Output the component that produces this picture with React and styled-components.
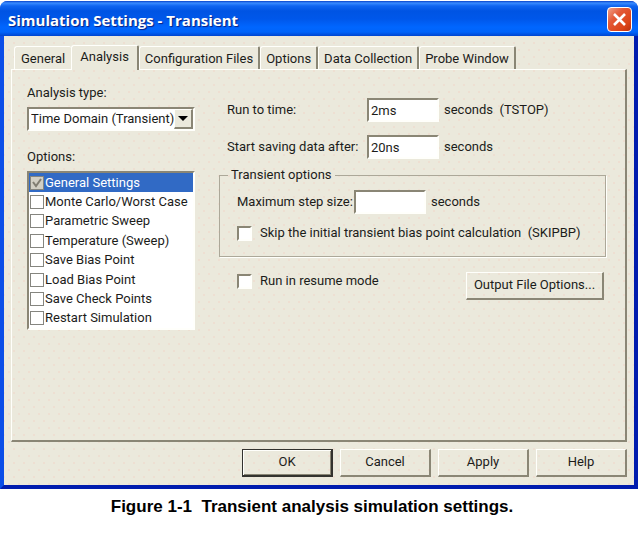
import React from "react";
import styled, { createGlobalStyle, css } from "styled-components";

const face = "#ebe9dc";
const shade = "#8a8675";
const midShade = "#aca899";
const light = "#fffffb";

const GlobalStyle = createGlobalStyle`
  *, *::before, *::after { box-sizing: border-box; }
  body {
    margin: 0;
    background: #fff;
    color: #1c1c1a;
    font: 13px/18px "Roboto", sans-serif;
  }
  button, input, select { font: inherit; color: inherit; margin: 0; }
`;

const Page = styled.main`
  padding-top: 1px;
`;

const Window = styled.section`
  border: solid #0535d8;
  border-width: 0 4px 4px;
  border-color: #0535d8 #001cae #001cae #0a4ee8;
  border-radius: 8px 8px 0 0;
  background-color: ${face};
  background-image: radial-gradient(circle, #eedfd2 0 1px, transparent 1px),
    radial-gradient(circle, #eedfd2 0 1px, transparent 1px);
  background-size: 10px 14px;
  background-position: 0 0, 5px 7px;
`;

const TitleBar = styled.header`
  display: flex;
  align-items: center;
  justify-content: space-between;
  height: 35px;
  margin: 0 -4px;
  padding: 2px 6px 0 8px;
  border-radius: 7px 7px 0 0;
  background: linear-gradient(
    #0842c8 0,
    #3a8cff 2px,
    #1065f0 5px,
    #0054e3 10px,
    #0057ea 18px,
    #0066ff 26px,
    #0064fa 31px,
    #0045cf 35px
  );
`;

const Title = styled.h1`
  margin: 0;
  color: #fff;
  font: bold 15px/22px "Open Sans", sans-serif;
  text-shadow: 1px 1px 1px #0a1f80;
  white-space: nowrap;
`;

const CloseButton = styled.button`
  display: grid;
  place-items: center;
  width: 25px;
  height: 25px;
  padding: 0;
  border: 1px solid #fff;
  border-radius: 4px;
  background: linear-gradient(135deg, #f0a088 0, #e35a38 35%, #dc4418 75%, #b83010 100%);
`;

const Client = styled.div`
  padding: 9px 7px 8px;
`;

const TabList = styled.div`
  display: flex;
  align-items: flex-end;
  padding-left: 3px;
`;

const Tab = styled.button`
  height: 23px;
  padding: 1px 5px 0;
  border: solid ${light};
  border-width: 1px 2px 0 1px;
  border-right-color: ${shade};
  border-radius: 3px 2px 0 0;
  background: ${face};
  white-space: nowrap;
  ${(p) =>
    p.$active &&
    css`
      height: 25px;
      margin-bottom: -1px;
      padding: 0 8px 2px;
      z-index: 1;
    `}
  ${(p) =>
    p.$beforeActive &&
    css`
      padding: 1px 6px 0;
      border-right-width: 0;
    `}
`;

const Panel = styled.div`
  display: grid;
  grid-template-columns: 168px 1fr;
  column-gap: 24px;
  padding: 14px 19px 110px 15px;
  border: solid ${shade};
  border-width: 1px 2px 2px 1px;
  border-top-color: ${light};
  border-left-color: ${light};
`;

const OptionsColumn = styled.div`
  display: flex;
  flex-direction: column;
`;

const SettingsColumn = styled.div`
  padding-top: 14px;
`;

const FieldLabel = styled.label`
  display: block;
  white-space: nowrap;
`;

const sunken = css`
  border: solid ${light};
  border-width: 2px;
  border-top-color: ${shade};
  border-left-color: ${shade};
  background: #fff;
`;

const SelectBox = styled.div`
  ${sunken}
  display: grid;
  grid-template-columns: 1fr 19px;
  height: 24px;
  margin: 5px 0 17px;
`;

const Select = styled.select`
  grid-area: 1 / 1 / 2 / 3;
  min-width: 0;
  padding: 0 0 0 2px;
  border: 0;
  background: transparent;
  appearance: none;
`;

const SelectArrow = styled.span`
  grid-area: 1 / 2;
  display: grid;
  place-items: center;
  border: solid ${shade};
  border-width: 1px 2px 2px 1px;
  border-top-color: ${light};
  border-left-color: ${light};
  background: ${face};
  pointer-events: none;
`;

const OptionList = styled.ul`
  ${sunken}
  display: grid;
  grid-auto-rows: 1fr;
  height: 159px;
  margin: 5px 0 0;
  padding: 0;
  list-style: none;
`;

const OptionRow = styled.li`
  display: flex;
  background: ${(p) => (p.$selected ? "#316ac5" : "transparent")};
  color: ${(p) => (p.$selected ? "#fff" : "inherit")};
`;

const OptionLabel = styled.label`
  display: flex;
  flex: 1;
  align-items: center;
  gap: 1px;
  padding-left: 1px;
  white-space: nowrap;
`;

const tick = `url("data:image/svg+xml,%3Csvg xmlns='http://www.w3.org/2000/svg' viewBox='0 0 12 12'%3E%3Cpath d='M2 5l3 4 5-7' fill='none' stroke='%23807d72' stroke-width='2'/%3E%3C/svg%3E")`;

const ListCheck = styled.input.attrs({ type: "checkbox" })`
  appearance: none;
  flex: none;
  width: 14px;
  height: 14px;
  border: 1px solid #85857f;
  background: #fff;
  &:checked {
    background: #d2cfc4 ${tick} center / 12px no-repeat;
  }
`;

const Row = styled.div`
  display: flex;
  align-items: center;
  height: 24px;
  padding-left: 8px;
  margin-bottom: ${(p) => p.$after}px;
`;

const RowLabel = styled(FieldLabel)`
  width: ${(p) => p.$width}px;
`;

const TextInput = styled.input.attrs({ type: "text" })`
  ${sunken}
  width: 72px;
  height: 24px;
  margin-right: 5px;
  padding: 0 2px;
`;

const Unit = styled.span`
  white-space: pre;
`;

const Group = styled.fieldset`
  min-width: 0;
  margin: 0;
  padding: 6px 0 11px 9px;
  border: 1px solid ${midShade};
  box-shadow: 1px 1px 0 ${light};
`;

const Legend = styled.legend`
  margin-left: -1px;
  padding: 0 3px;
`;

const CheckLabel = styled.label`
  display: flex;
  align-items: center;
  gap: 8px;
  white-space: pre;
`;

const CheckBox = styled.input.attrs({ type: "checkbox" })`
  ${sunken}
  appearance: none;
  flex: none;
  width: 15px;
  height: 15px;
  &:checked {
    background: #fff ${tick} center / 11px no-repeat;
  }
`;

const ResumeRow = styled.div`
  display: flex;
  align-items: flex-start;
  justify-content: space-between;
  padding: 15px 2px 0 18px;
`;

const Button = styled.button`
  width: ${(p) => (p.$wide ? 138 : 91)}px;
  height: 28px;
  padding: 0 0 1px;
  border: solid ${shade};
  border-width: 1px 2px 2px 1px;
  border-top-color: ${light};
  border-left-color: ${light};
  background: transparent;
  white-space: nowrap;
  ${(p) =>
    p.$default &&
    css`
      border-color: #33322e;
      box-shadow: inset 1px 1px 0 ${light}, inset -1px -1px 0 ${shade};
    `}
`;

const Actions = styled.footer`
  display: flex;
  justify-content: flex-end;
  gap: 7px;
  padding-top: 7px;
`;

const Caption = styled.p`
  margin: 8px 0 20px;
  padding-right: 14px;
  color: #000;
  font: bold 17px/20px "Liberation Sans", Arial, sans-serif;
  text-align: center;
  white-space: pre;
`;

const tabs = ["General", "Analysis", "Configuration Files", "Options", "Data Collection", "Probe Window"];
const options = [
  "General Settings",
  "Monte Carlo/Worst Case",
  "Parametric Sweep",
  "Temperature (Sweep)",
  "Save Bias Point",
  "Load Bias Point",
  "Save Check Points",
  "Restart Simulation",
];

export default function App() {
  return (
    <Page>
      <GlobalStyle />
      <Window>
        <TitleBar>
          <Title>Simulation Settings - Transient</Title>
          <CloseButton type="button" aria-label="Close">
            <svg width="15" height="15" viewBox="0 0 15 15">
              <path d="M2 2l11 11M13 2L2 13" stroke="#fff" strokeWidth="2.6" />
            </svg>
          </CloseButton>
        </TitleBar>
        <Client>
          <TabList role="tablist">
            {tabs.map((name, i) => (
              <Tab
                key={name}
                type="button"
                role="tab"
                aria-selected={i === 1}
                $active={i === 1}
                $beforeActive={i === 0}
              >
                {name}
              </Tab>
            ))}
          </TabList>
          <Panel role="tabpanel">
            <OptionsColumn>
              <FieldLabel htmlFor="analysis">Analysis type:</FieldLabel>
              <SelectBox>
                <Select id="analysis" defaultValue="transient">
                  <option value="transient">Time Domain (Transient)</option>
                </Select>
                <SelectArrow>
                  <svg width="10" height="5" viewBox="0 0 10 5">
                    <path d="M0 0h10L5 5z" fill="#000" />
                  </svg>
                </SelectArrow>
              </SelectBox>
              <span id="options-label">Options:</span>
              <OptionList aria-labelledby="options-label">
                {options.map((name, i) => (
                  <OptionRow key={name} $selected={i === 0}>
                    <OptionLabel>
                      <ListCheck defaultChecked={i === 0} />
                      {name}
                    </OptionLabel>
                  </OptionRow>
                ))}
              </OptionList>
            </OptionsColumn>
            <SettingsColumn>
              <Row $after={13}>
                <RowLabel htmlFor="run" $width={140}>Run to time:</RowLabel>
                <TextInput id="run" defaultValue="2ms" />
                <Unit>{"seconds  (TSTOP)"}</Unit>
              </Row>
              <Row $after={7}>
                <RowLabel htmlFor="start" $width={140}>Start saving data after:</RowLabel>
                <TextInput id="start" defaultValue="20ns" />
                <Unit>seconds</Unit>
              </Row>
              <Group>
                <Legend>Transient options</Legend>
                <Row $after={7}>
                  <RowLabel htmlFor="step" $width={117}>Maximum step size:</RowLabel>
                  <TextInput id="step" />
                  <Unit>seconds</Unit>
                </Row>
                <Row $after={0}>
                  <CheckLabel>
                    <CheckBox />
                    {"Skip the initial transient bias point calculation  (SKIPBP)"}
                  </CheckLabel>
                </Row>
              </Group>
              <ResumeRow>
                <CheckLabel>
                  <CheckBox />
                  Run in resume mode
                </CheckLabel>
                <Button type="button" $wide>Output File Options...</Button>
              </ResumeRow>
            </SettingsColumn>
          </Panel>
          <Actions>
            <Button type="button" $default>OK</Button>
            <Button type="button">Cancel</Button>
            <Button type="button">Apply</Button>
            <Button type="button">Help</Button>
          </Actions>
        </Client>
      </Window>
      <Caption>{"Figure 1-1  Transient analysis simulation settings."}</Caption>
    </Page>
  );
}
